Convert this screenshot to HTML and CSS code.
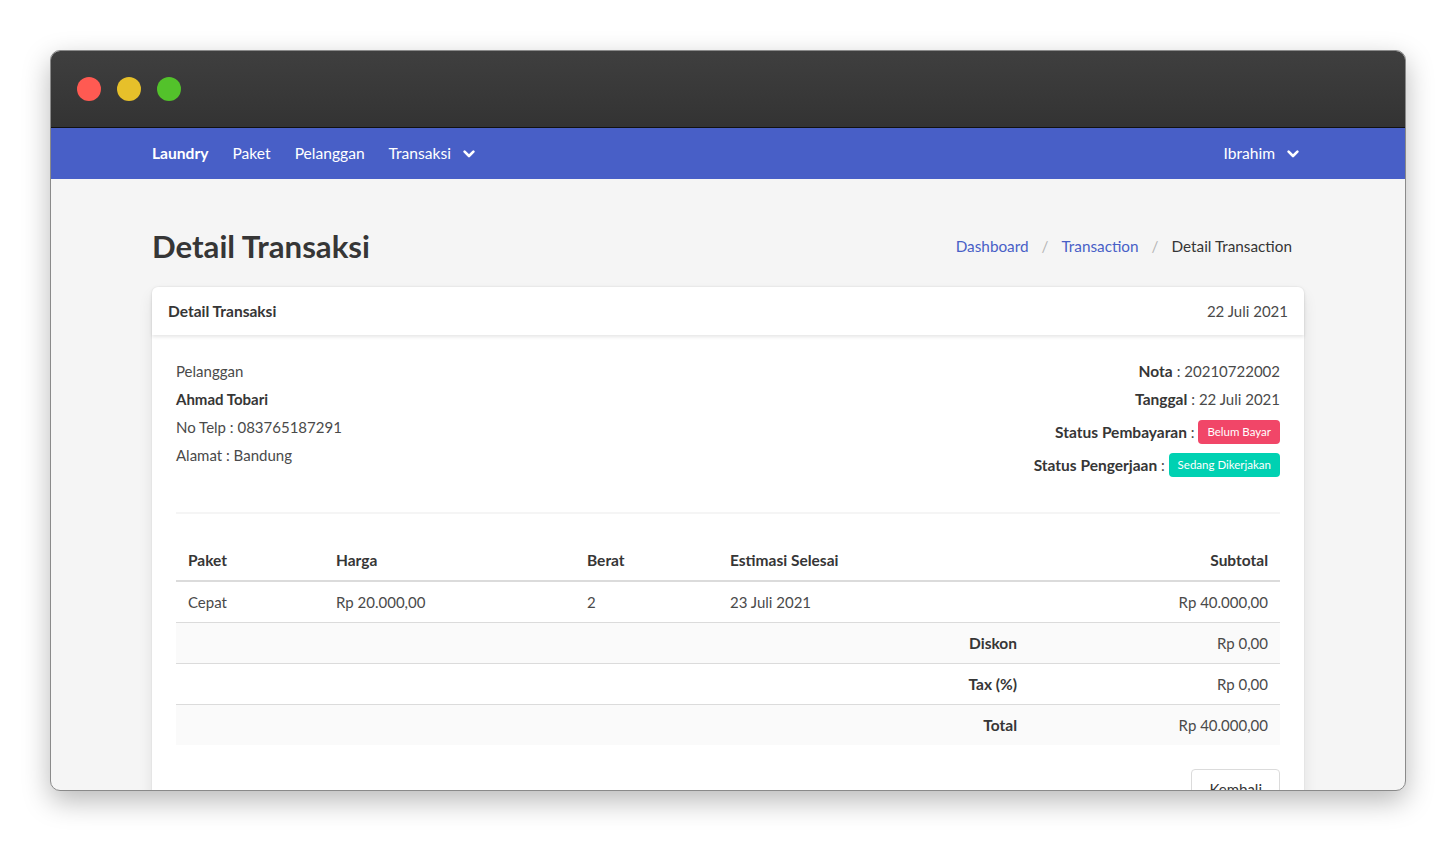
FILE: index.html
```html
<!DOCTYPE html>
<html lang="id">
<head>
<meta charset="utf-8">
<title>Detail Transaksi</title>
<link rel="stylesheet" href="styles.css">
</head>
<body>
<div class="stage">
  <div class="window">
    <div class="titlebar">
      <span class="dot red"></span>
      <span class="dot yellow"></span>
      <span class="dot green"></span>
    </div>
    <nav class="navbar">
      <div class="nav-start">
        <a class="nav-item brand">Laundry</a>
        <a class="nav-item">Paket</a>
        <a class="nav-item">Pelanggan</a>
        <a class="nav-item">Transaksi
          <svg class="chev" viewBox="0 0 12 8" width="12" height="8"><path d="M1.6 1.6 L6 6 L10.4 1.6" /></svg>
        </a>
      </div>
      <div class="nav-end">
        <a class="nav-item">Ibrahim
          <svg class="chev" viewBox="0 0 12 8" width="12" height="8"><path d="M1.6 1.6 L6 6 L10.4 1.6" /></svg>
        </a>
      </div>
    </nav>
    <main class="content">
      <div class="container">
        <div class="page-head">
          <h1 class="title">Detail Transaksi</h1>
          <ul class="breadcrumb">
            <li><a>Dashboard</a></li>
            <li class="sep">/</li>
            <li><a>Transaction</a></li>
            <li class="sep">/</li>
            <li class="active">Detail Transaction</li>
          </ul>
        </div>
        <div class="card">
          <header class="card-header">
            <span class="card-title">Detail Transaksi</span>
            <span class="card-date">22 Juli 2021</span>
          </header>
          <div class="card-body">
            <div class="info">
              <div class="info-left">
                <p>Pelanggan</p>
                <p class="strong">Ahmad Tobari</p>
                <p>No Telp : 083765187291</p>
                <p>Alamat : Bandung</p>
              </div>
              <div class="info-right">
                <p><b>Nota</b> : 20210722002</p>
                <p><b>Tanggal</b> : 22 Juli 2021</p>
                <p class="tag-row first"><b>Status Pembayaran</b>&nbsp;:&nbsp;<span class="tag danger">Belum Bayar</span></p>
                <p class="tag-row"><b>Status Pengerjaan</b>&nbsp;:&nbsp;<span class="tag success">Sedang Dikerjakan</span></p>
              </div>
            </div>
            <hr class="divider">
            <table class="table">
              <colgroup>
                <col class="c1"><col class="c2"><col class="c3"><col class="c4"><col class="c5">
              </colgroup>
              <thead>
                <tr>
                  <th>Paket</th>
                  <th>Harga</th>
                  <th>Berat</th>
                  <th>Estimasi Selesai</th>
                  <th class="right">Subtotal</th>
                </tr>
              </thead>
              <tbody>
                <tr>
                  <td>Cepat</td>
                  <td>Rp 20.000,00</td>
                  <td>2</td>
                  <td>23 Juli 2021</td>
                  <td class="right">Rp 40.000,00</td>
                </tr>
                <tr>
                  <th colspan="4" class="right">Diskon</th>
                  <td class="right">Rp 0,00</td>
                </tr>
                <tr>
                  <th colspan="4" class="right">Tax (%)</th>
                  <td class="right">Rp 0,00</td>
                </tr>
                <tr>
                  <th colspan="4" class="right">Total</th>
                  <td class="right">Rp 40.000,00</td>
                </tr>
              </tbody>
            </table>
            <div class="actions">
              <button class="button">Kembali</button>
            </div>
          </div>
        </div>
      </div>
    </main>
  </div>
</div>
</body>
</html>
```

FILE: styles.css
```css
* { box-sizing: border-box; }
html, body { margin: 0; padding: 0; }
body {
  background: #ffffff;
  font-family: "Lato", "Open Sans", sans-serif;
  font-size: 15px;
  color: #4a4a4a;
}
.stage {
  padding: 50px;
  width: 1456px;
  height: 841px;
}
.window {
  width: 1356px;
  height: 741px;
  border-radius: 10px;
  overflow: hidden;
  border: 1px solid #8a8a8a;
  box-shadow: 0 10px 28px rgba(0,0,0,0.28);
  display: flex;
  flex-direction: column;
  background: #f5f5f5;
}
.titlebar {
  height: 77px;
  flex: none;
  background: linear-gradient(#3f3f3f, #333333);
  border-bottom: 1px solid #111;
  display: flex;
  align-items: center;
  padding-left: 26px;
  gap: 16px;
}
.dot { width: 24px; height: 24px; border-radius: 50%; display: block; }
.red { background: #ff5a52; }
.yellow { background: #e6c02a; }
.green { background: #53c22b; }

.navbar {
  height: 51px;
  flex: none;
  background: #485fc7;
  display: flex;
  justify-content: space-between;
  align-items: center;
  padding: 0 94px 0 89px;
}
.nav-start, .nav-end { display: flex; align-items: center; }
.nav-item {
  color: #fff;
  padding: 0 12px;
  display: flex;
  align-items: center;
  gap: 12px;
  font-size: 15.6px;
  margin-top: -2px;
}
.brand { font-weight: 700; }
.chev { fill: none; stroke: #fff; stroke-width: 2.6; stroke-linecap: round; stroke-linejoin: round; margin-top: 2px; }

.content { flex: 1; overflow: hidden; }
.container { width: 1152px; margin: 0 auto; padding-top: 47px; }
.page-head {
  display: flex;
  justify-content: space-between;
  align-items: center;
  padding-left: 0;
  height: 40px;
}
.title {
  margin: 0;
  font-size: 31.2px;
  font-weight: 700;
  color: #363636;
  line-height: 40px;
}
.breadcrumb {
  list-style: none;
  margin: 0;
  padding: 0 12px 0 0;
  display: flex;
  gap: 13px;
  font-size: 15.3px;
  align-items: center;
}
.breadcrumb a { color: #485fc7; }
.breadcrumb .sep { color: #b5b5b5; }
.breadcrumb .active { color: #363636; }

.card {
  margin-top: 21px;
  background: #fff;
  border-radius: 6px;
  box-shadow: 0 0.5em 1em -0.125em rgba(10,10,10,0.1), 0 0 0 1px rgba(10,10,10,0.02);
}
.card-header {
  height: 48px;
  display: flex;
  justify-content: space-between;
  align-items: center;
  padding: 0 16px;
  box-shadow: 0 0.125em 0.25em rgba(10,10,10,0.1);
  border-radius: 6px 6px 0 0;
}
.card-title { font-weight: 700; color: #363636; font-size: 15.5px; }
.card-date { color: #4a4a4a; }
.card-body { padding: 24px; }

.info { display: flex; justify-content: space-between; }
.info p { margin: 0 0 4px; line-height: 24px; }
.info .strong, .info b { font-weight: 700; color: #363636; }
.info-right { text-align: right; }
.info-right p { display: flex; justify-content: flex-end; align-items: center; }
.info-right p b { margin-right: 4px; font-size: 15.5px; }
.info-right p.tag-row { height: 33px; margin-bottom: 0; }
.info-right p.tag-row.first { margin-top: 1px; }
.info-right p.tag-row b { margin-right: 0; }
.tag {
  display: inline-flex;
  align-items: center;
  height: 24px;
  padding: 0 9px;
  border-radius: 4px;
  color: #fff;
  font-size: 11.5px;
  line-height: 1;
}
.danger { background: #f14668; }
.success { background: #00d1b2; }

.divider {
  border: none;
  height: 2px;
  background: #f5f5f5;
  margin: 31px 0 24px;
}

.table {
  width: 100%;
  border-collapse: collapse;
  color: #363636;
}
.c1 { width: 148px; }
.c2 { width: 251px; }
.c3 { width: 143px; }
.c4 { width: 311px; }
.c5 { width: 251px; }
.table th, .table td {
  padding: 0 12px;
  height: 41px;
  text-align: left;
  vertical-align: middle;
  border-bottom: 1px solid #dbdbdb;
  line-height: 24px;
}
.table td { color: #4a4a4a; }
.table th { font-weight: 700; color: #363636; font-size: 15.5px; }
.table thead th { border-bottom-width: 2px; height: 43px; padding-top: 1px; }
.table tbody tr:nth-child(even) { background: #fafafa; }
.table tbody tr:last-child th, .table tbody tr:last-child td { border-bottom: none; height: 41px; }
.table .right { text-align: right; }

.actions { display: flex; justify-content: flex-end; margin-top: 24px; }
.button {
  font-family: inherit;
  font-size: 15px;
  color: #363636;
  background: #fff;
  border: 1px solid #dbdbdb;
  border-radius: 4px;
  height: 40px;
  padding: 0 17px;
}
```
